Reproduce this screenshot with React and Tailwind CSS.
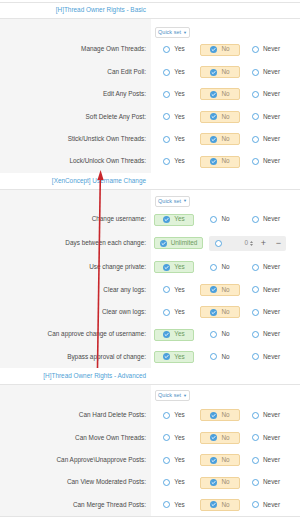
import React from 'react';

const sections = [
  {
    title: '[H]Thread Owner Rights - Basic',
    qsPad: 'pt-[8px]',
    qsHeight: 'h-[19.5px]',
    rows: [
      { label: 'Manage Own Threads:', value: 'no' },
      { label: 'Can Edit Poll:', value: 'no' },
      { label: 'Edit Any Posts:', value: 'no' },
      { label: 'Soft Delete Any Post:', value: 'no' },
      { label: 'Stick/Unstick Own Threads:', value: 'no' },
      { label: 'Lock/Unlock Own Threads:', value: 'no' },
    ],
  },
  {
    title: '[XenConcept] Username Change',
    qsPad: 'pt-[6px]',
    qsHeight: 'h-[18.5px]',
    rows: [
      { label: 'Change username:', value: 'yes' },
      { label: 'Days between each change:', type: 'days' },
      { label: 'Use change private:', value: 'yes' },
      { label: 'Clear any logs:', value: 'no' },
      { label: 'Clear own logs:', value: 'no' },
      { label: 'Can approve change of username:', value: 'yes' },
      { label: 'Bypass approval of change:', value: 'yes' },
    ],
  },
  {
    title: '[H]Thread Owner Rights - Advanced',
    qsPad: 'pt-[5px]',
    qsHeight: 'h-[19px]',
    rows: [
      { label: 'Can Hard Delete Posts:', value: 'no' },
      { label: 'Can Move Own Threads:', value: 'no' },
      { label: 'Can Approve\\Unapprove Posts:', value: 'no' },
      { label: 'Can View Moderated Posts:', value: 'no' },
      { label: 'Can Merge Thread Posts:', value: 'no' },
    ],
  },
];

const Radio = ({ checked }) =>
  checked ? (
    <svg width="7" height="7" viewBox="0 0 14 14" className="shrink-0">
      <circle cx="7" cy="7" r="7" fill="#4a9fdc" />
      <path d="M4 7.2 L6.2 9.3 L10.2 4.9" fill="none" stroke="#fff" strokeWidth="1.8" strokeLinecap="round" strokeLinejoin="round" />
    </svg>
  ) : (
    <svg width="7" height="7" viewBox="0 0 14 14" className="shrink-0">
      <circle cx="7" cy="7" r="6" fill="#fff" stroke="#4a9fdc" strokeWidth="1.8" />
    </svg>
  );

const Option = ({ label, selected, tone }) => {
  const box =
    selected && tone === 'yes'
      ? 'bg-[#dff2d8] border-[#b9dfac] text-[#6c9a5e]'
      : selected
      ? 'bg-[#fdebc6] border-[#f0d39b] text-[#9a8c74]'
      : 'border-transparent text-[#505050]';
  return (
    <div className={`w-[40px] h-[12px] flex items-center justify-center gap-[4px] rounded-[2px] border ${box}`}>
      <Radio checked={selected} />
      <span>{label}</span>
    </div>
  );
};

const Choices = ({ value }) => (
  <div className="flex items-center gap-[6px]">
    <Option label="Yes" selected={value === 'yes'} tone="yes" />
    <Option label="No" selected={value === 'no'} tone="no" />
    <Option label="Never" selected={value === 'never'} tone="never" />
  </div>
);

const DaysInput = () => (
  <div className="flex items-center gap-[6px]">
    <div className="w-[49px] h-[12px] flex items-center justify-center gap-[4px] rounded-[2px] border border-[#b9dfac] bg-[#dff2d8] text-[#6c9a5e]">
      <Radio checked />
      <span>Unlimited</span>
    </div>
    <div className="w-[77px] h-[15px] flex items-center rounded-[2px] bg-[#eeeeee] text-[#8a8a8a]">
      <div className="flex-1 flex items-center pl-[6px] pr-[3px]">
        <Radio checked={false} />
        <span className="ml-auto">0</span>
        <span className="ml-[2px] flex flex-col gap-[1px]">
          <svg width="3" height="2" viewBox="0 0 6 4"><path d="M0 4 L3 0 L6 4 Z" fill="#8a8a8a" /></svg>
          <svg width="3" height="2" viewBox="0 0 6 4"><path d="M0 0 L3 4 L6 0 Z" fill="#8a8a8a" /></svg>
        </span>
      </div>
      <div className="w-[15px] text-center text-[9px] text-[#666]">+</div>
      <div className="w-[15px] text-center text-[9px] text-[#666]">−</div>
    </div>
  </div>
);

const Row = ({ row }) => (
  <div className={`flex ${row.type === 'days' ? 'h-[25.5px]' : 'h-[22.4px]'}`}>
    <div className="w-[151px] shrink-0 bg-[#f5f5f5] flex items-center justify-end pr-[5px] text-[#4a4a4a]">
      {row.label}
    </div>
    <div className="flex-1 flex items-center pl-[3px]">
      {row.type === 'days' ? <DaysInput /> : <Choices value={row.value} />}
    </div>
  </div>
);

const Section = ({ section, first }) => (
  <div>
    <div className={`h-[17px] flex border-b border-[#e4e4e4] ${first ? 'border-t' : ''}`}>
      <div className="w-[151px] shrink-0 flex items-center justify-end pr-[5px] text-[#4f9fd6]">
        {section.title}
      </div>
    </div>
    <div className={`flex ${section.qsHeight}`}>
      <div className="w-[151px] shrink-0 bg-[#f5f5f5]" />
      <div className={`flex-1 pl-[4px] ${section.qsPad}`}>
        <div className="w-[35px] h-[11px] flex items-center justify-center gap-[2px] rounded-[2px] border border-[#dcdcdc] bg-white text-[#4f8fc4] text-[5.5px]">
          Quick set
          <span className="text-[4px]">▼</span>
        </div>
      </div>
    </div>
    {section.rows.map((row) => (
      <Row key={row.label} row={row} />
    ))}
  </div>
);

const App = () => {
  return (
    <div className="relative w-[300px] h-[517px] overflow-hidden bg-white text-[6.4px] leading-none font-['Liberation_Sans',Arial,sans-serif]">
      <div className="h-[2px]" />
      {sections.map((s, i) => (
        <Section key={s.title} section={s} first={i === 0} />
      ))}
      <div className="border-t border-[#e4e4e4]" />

      {/* red annotation arrow */}
      <svg className="absolute left-0 top-0 pointer-events-none" width="300" height="517">
        <line x1="97.5" y1="368" x2="100.3" y2="178" stroke="#c8262b" strokeWidth="1.6" />
        <path d="M100.6 170 L97.4 180 L103.6 180 Z" fill="#c8262b" />
      </svg>
    </div>
  );
};

export default App;
